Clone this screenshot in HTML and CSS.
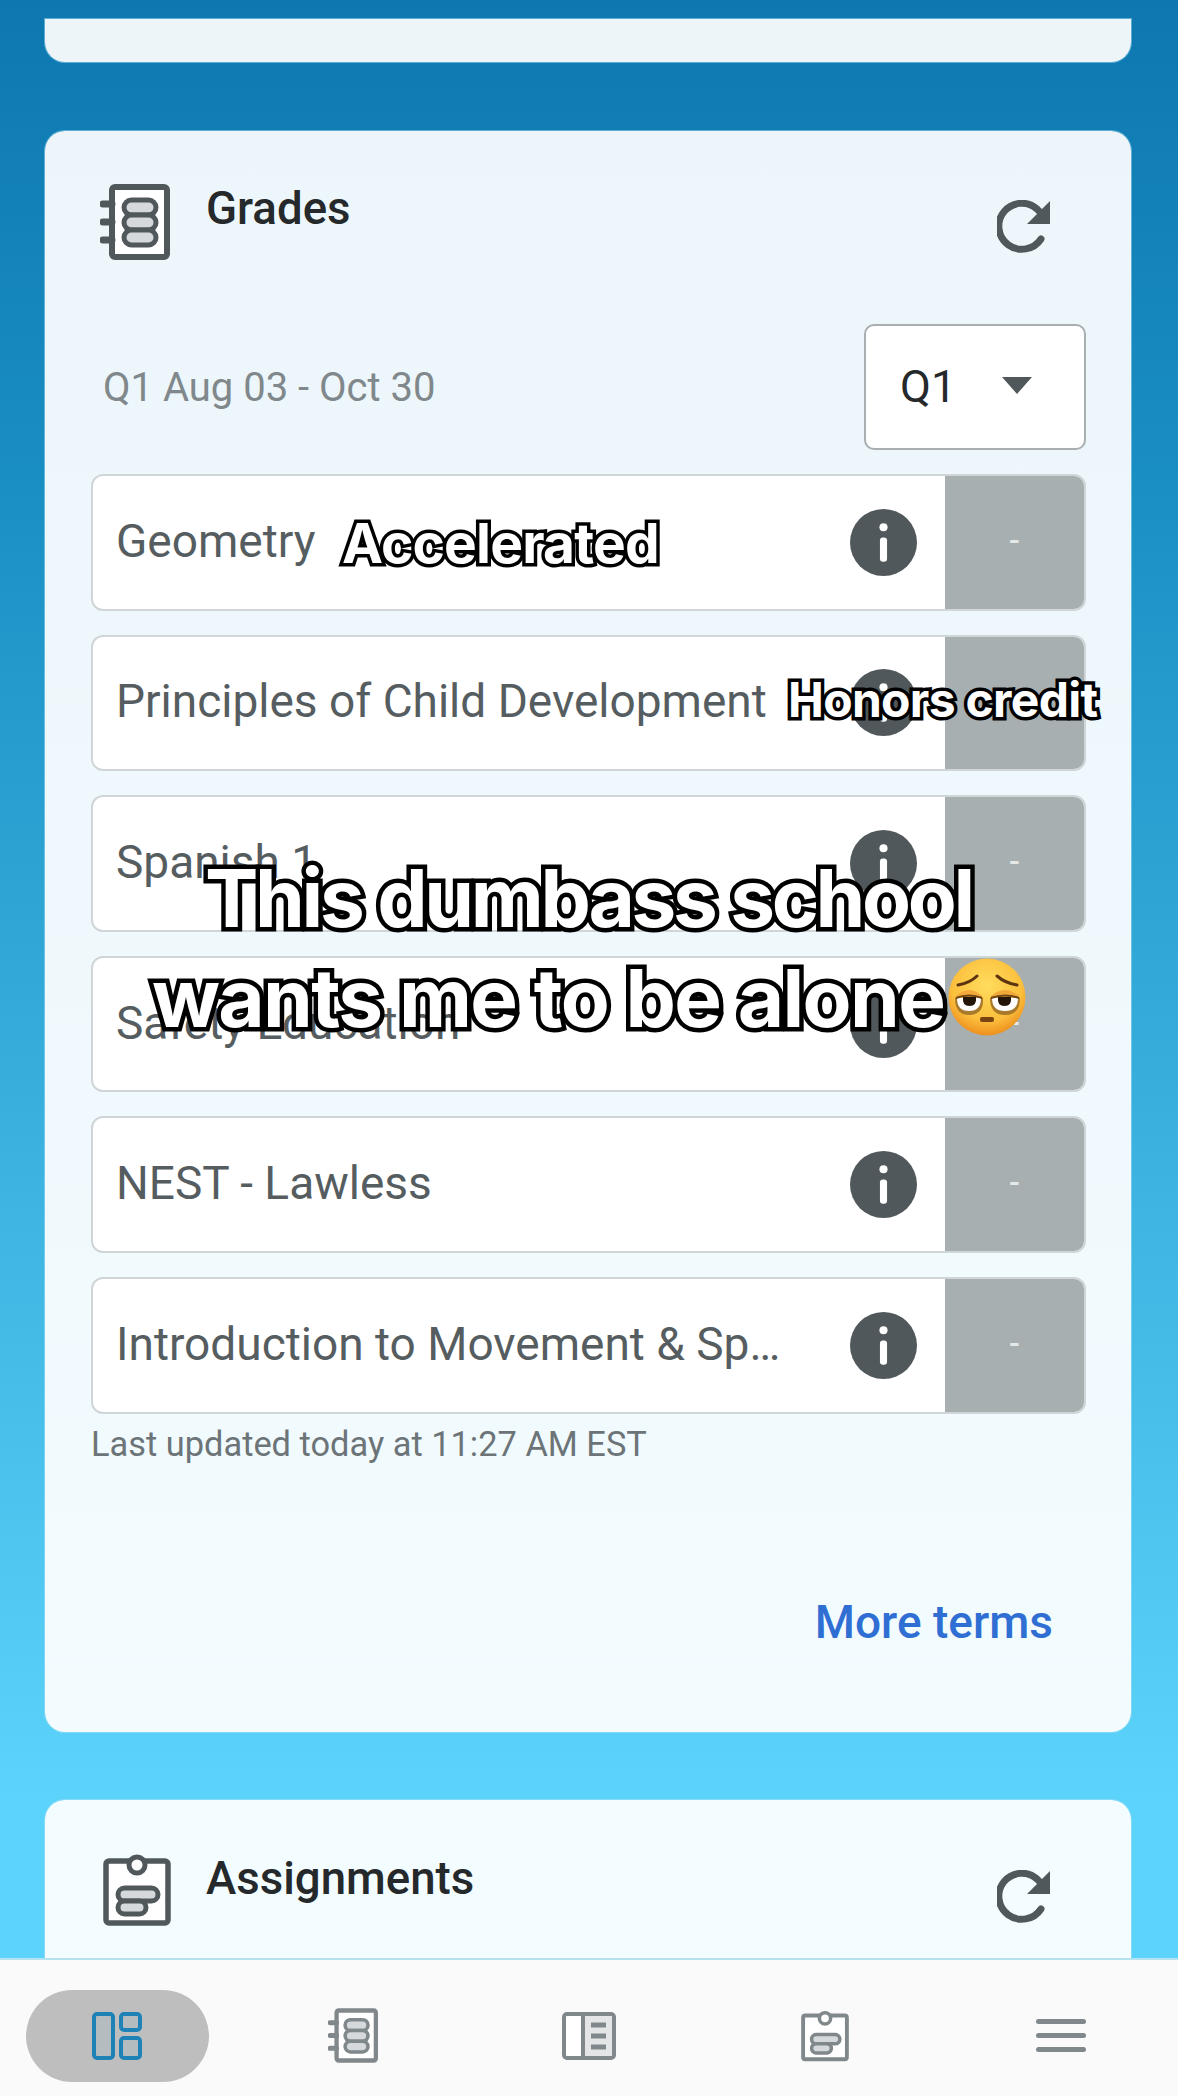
FILE: index.html
```html
<!DOCTYPE html>
<html lang="en">
<head>
    <meta charset="UTF-8">
    <title>Grades</title>
    <link rel="stylesheet" href="styles.css">
</head>
<body>
    <svg class="defs" width="0" height="0">
        <symbol id="i-notebook" viewBox="0 0 70 76">
            <rect x="12" y="3" width="55" height="70" rx="3" fill="#fff" stroke="currentColor" stroke-width="6"/>
            <path d="M3 20h9M3 38h9M3 56h9" fill="none" stroke="currentColor" stroke-width="7" stroke-linecap="round"/>
            <g fill="#d6d9db" stroke="currentColor" stroke-width="5">
                <rect x="24" y="16" width="32" height="15" rx="7.5"/>
                <rect x="24" y="31" width="32" height="15" rx="7.5"/>
                <rect x="24" y="46" width="32" height="15" rx="7.5"/>
            </g>
        </symbol>
        <symbol id="i-clipboard" viewBox="0 0 68 72">
            <rect x="3" y="7" width="62" height="62" rx="3" fill="#fff" stroke="currentColor" stroke-width="5.5"/>
            <circle cx="34" cy="11" r="8" fill="#fff" stroke="currentColor" stroke-width="5"/>
            <rect x="15" y="34" width="40" height="13" rx="6.5" fill="#d6d9db" stroke="currentColor" stroke-width="5"/>
            <rect x="15" y="47" width="28" height="13" rx="6.5" fill="#d6d9db" stroke="currentColor" stroke-width="5"/>
        </symbol>
        <symbol id="i-refresh" viewBox="0 0 54 54">
            <path d="M44 39A23 23 0 1 1 40 9L47 16" fill="none" stroke="currentColor" stroke-width="7" stroke-linecap="round"/>
            <path d="M53 1V24H30Z" fill="currentColor"/>
        </symbol>
        <symbol id="i-info" viewBox="0 0 66 66">
            <circle cx="33" cy="33" r="33" fill="currentColor"/>
            <circle cx="33" cy="18" r="4" fill="#fff"/>
            <rect x="29.5" y="28" width="7" height="24" rx="3" fill="#fff"/>
        </symbol>
    </svg>

    <div class="screen">
        <main class="scroll">
            <section class="card card-stub"></section>

            <section class="card card-grades">
                <div class="card-head">
                    <svg class="head-icon"><use href="#i-notebook"/></svg>
                    <h2 class="card-title">Grades</h2>
                    <svg class="refresh"><use href="#i-refresh"/></svg>
                </div>

                <div class="term-row">
                    <span class="term-dates">Q1 Aug 03 - Oct 30</span>
                    <div class="term-select">
                        <span>Q1</span>
                        <span class="caret"></span>
                    </div>
                </div>

                <ul class="grade-list">
                    <li class="grade-row">
                        <span class="course">Geometry</span>
                        <svg class="info"><use href="#i-info"/></svg>
                        <span class="score">-</span>
                    </li>
                    <li class="grade-row">
                        <span class="course">Principles of Child Development</span>
                        <svg class="info"><use href="#i-info"/></svg>
                        <span class="score">-</span>
                    </li>
                    <li class="grade-row">
                        <span class="course">Spanish 1</span>
                        <svg class="info"><use href="#i-info"/></svg>
                        <span class="score">-</span>
                    </li>
                    <li class="grade-row">
                        <span class="course">Safety Education</span>
                        <svg class="info"><use href="#i-info"/></svg>
                        <span class="score">-</span>
                    </li>
                    <li class="grade-row">
                        <span class="course">NEST - Lawless</span>
                        <svg class="info"><use href="#i-info"/></svg>
                        <span class="score">-</span>
                    </li>
                    <li class="grade-row">
                        <span class="course">Introduction to Movement &amp; Sports</span>
                        <svg class="info"><use href="#i-info"/></svg>
                        <span class="score">-</span>
                    </li>
                </ul>

                <p class="updated">Last updated today at 11:27 AM EST</p>
                <a class="more-terms">More terms</a>
            </section>

            <section class="card card-assign">
                <div class="card-head">
                    <svg class="head-icon head-icon-clip"><use href="#i-clipboard"/></svg>
                    <h2 class="card-title">Assignments</h2>
                    <svg class="refresh"><use href="#i-refresh"/></svg>
                </div>
            </section>
        </main>

        <nav class="tabbar">
            <div class="tab tab-active">
                <svg class="tab-dash" viewBox="0 0 50 48">
                    <g fill="#b4bcc0" stroke="currentColor" stroke-width="4">
                        <rect x="2" y="2" width="19" height="44" rx="3"/>
                        <rect x="29" y="2" width="19" height="16" rx="3"/>
                        <rect x="29" y="26" width="19" height="20" rx="3"/>
                    </g>
                </svg>
            </div>
            <div class="tab">
                <svg class="tab-note"><use href="#i-notebook"/></svg>
            </div>
            <div class="tab">
                <svg class="tab-side" viewBox="0 0 54 48">
                    <rect x="2" y="2" width="50" height="44" rx="3" fill="#fff" stroke="currentColor" stroke-width="4"/>
                    <path d="M22 4h28v40H22z" fill="#e3e5e7"/>
                    <path d="M21 2v44" stroke="currentColor" stroke-width="4"/>
                    <path d="M29 13h15M29 24h15M29 35h15" stroke="currentColor" stroke-width="5"/>
                </svg>
            </div>
            <div class="tab">
                <svg class="tab-clip"><use href="#i-clipboard"/></svg>
            </div>
            <div class="tab">
                <div class="burger"><i></i><i></i><i></i></div>
            </div>
        </nav>

        <!-- caption stickers sit on top of the screenshot -->
        <span class="sticker sticker-acc">Accelerated</span>
        <span class="sticker sticker-hon">Honors credit</span>
        <p class="caption caption-one">This dumbass school</p>
        <p class="caption caption-two">wants me to be alone</p>
        <svg class="emoji" viewBox="0 0 78 78">
            <defs>
                <radialGradient id="face" cx="50%" cy="35%" r="65%">
                    <stop offset="0" stop-color="#ffdc5e"/>
                    <stop offset=".7" stop-color="#fbbf3c"/>
                    <stop offset="1" stop-color="#ee8f1e"/>
                </radialGradient>
            </defs>
            <circle cx="39" cy="39" r="38.5" fill="url(#face)"/>
            <path d="M10 27Q22 25 29 18M69 27Q57 25 49 18" fill="none" stroke="#5c3410" stroke-width="3" stroke-linecap="round"/>
            <path d="M8 38Q21 26 34 38L34 46H8ZM43 38Q57 26 71 38L71 46H43Z" fill="#f3a93a"/>
            <path d="M7 40H35Q36 57 21 57Q7 57 7 40ZM42 40H72Q72 57 57 57Q42 57 42 40Z" fill="#a87a2a"/>
            <path d="M9 40H33Q33 53 21 53Q9 53 9 40ZM44 40H70Q70 53 57 53Q44 53 44 40Z" fill="#fff"/>
            <path d="M15 39H28Q29 48 21.5 48Q14 48 15 39ZM50 39H63Q64 48 56.5 48Q49 48 50 39Z" fill="#241509"/>
            <path d="M8 40Q21 35 34 40M43 40Q57 35 71 40" fill="none" stroke="#6b4414" stroke-width="2"/>
            <rect x="32" y="59" width="14" height="5" rx="2" fill="#7a4312"/>
        </svg>
    </div>
</body>
</html>
```

FILE: styles.css
```css
* {
    margin: 0;
    padding: 0;
    box-sizing: border-box;
}

ul {
    list-style: none;
}

body {
    width: 1178px;
    height: 2096px;
    overflow: hidden;
    font-family: Roboto, "Liberation Sans", sans-serif;
}

.defs {
    position: absolute;
}

.screen {
    position: relative;
    height: 2096px;
    display: flex;
    flex-direction: column;
}

.scroll {
    flex: 1;
    overflow: hidden;
    padding: 19px 47px 0 45px;
    background: linear-gradient(180deg, #0e77b0 0%, #1a8fc4 25%, #5bd3fa 92%);
}

.card {
    background: rgba(255, 255, 255, 0.925);
    border-radius: 20px;
    box-shadow: 0 0 0 1px rgba(170, 225, 245, 0.5);
}

.card-stub {
    height: 43px;
    border-radius: 0 0 20px 20px;
}

.card-grades {
    height: 1601px;
    margin-top: 69px;
    padding: 53px 45px 0 46px;
    display: flex;
    flex-direction: column;
}

.card-assign {
    height: 300px;
    margin-top: 68px;
    padding: 54px 45px 0 58px;
}

.card-head {
    display: flex;
    align-items: flex-start;
    height: 87px;
}

.card-grades .card-head {
    padding-left: 9px;
}

.head-icon {
    width: 70px;
    height: 76px;
    color: #50585b;
    flex-shrink: 0;
}

.head-icon-clip {
    width: 68px;
    height: 72px;
}

.card-title {
    margin: 0 0 0 36px;
    font-size: 45.6px;
    font-weight: 500;
    line-height: 50px;
    color: #25292b;
}

.head-icon-clip + .card-title {
    margin-left: 35px;
}

.refresh {
    width: 54px;
    height: 54px;
    margin: 16px 35px 0 auto;
    color: #50585b;
}

.term-row {
    margin-top: 53px;
    height: 126px;
    display: flex;
    align-items: center;
    justify-content: space-between;
    padding-left: 12px;
}

.term-dates {
    font-size: 40px;
    color: #80888c;
}

.term-select {
    width: 222px;
    height: 126px;
    display: flex;
    align-items: center;
    padding: 0 0 2px 34px;
    gap: 46px;
    background: #fff;
    border: 2px solid #a9aeb1;
    border-radius: 10px;
    font-size: 45px;
    color: #25292b;
}

.caret {
    width: 0;
    height: 0;
    border-left: 15px solid transparent;
    border-right: 15px solid transparent;
    border-top: 17px solid #50585b;
    margin-top: -2px;
}

.grade-list {
    margin-top: 24px;
    display: flex;
    flex-direction: column;
    gap: 24px;
}

.grade-row {
    height: 136.6px;
    display: flex;
    align-items: center;
    background: #fff;
    border: 2px solid #d0d5d8;
    border-radius: 12px;
    overflow: hidden;
}

.course {
    width: 676px;
    margin: -3px 0 0 23px;
    font-size: 46px;
    color: #565d60;
    white-space: nowrap;
    overflow: hidden;
    text-overflow: ellipsis;
}

.info {
    width: 67px;
    height: 67px;
    margin-left: 58px;
    color: #50585b;
    flex-shrink: 0;
}

.score {
    width: 139px;
    align-self: stretch;
    margin-left: auto;
    padding-bottom: 5px;
    display: flex;
    align-items: center;
    justify-content: center;
    background: #a7afb0;
    color: #e4e8e8;
    font-size: 32px;
    font-weight: 500;
}

.updated {
    margin-top: 10px;
    font-size: 34.4px;
    line-height: 40px;
    color: #6c7478;
}

.more-terms {
    margin: 130px 33px 0 auto;
    font-size: 46px;
    font-weight: 500;
    line-height: 56px;
    color: #2f6fd3;
}

.tabbar {
    height: 138px;
    flex-shrink: 0;
    display: flex;
    align-items: center;
    padding: 0 26px 0 26px;
    background: #fafafa;
    border-top: 2px solid #b5e2ef;
    color: #80888b;
}

.tab {
    width: 183px;
    height: 92px;
    margin: 15px 53px 0 0;
    display: flex;
    align-items: center;
    justify-content: center;
}

.tab-active {
    background: #bebebe;
    border-radius: 46px;
    color: #1e82b6;
}

.tab:last-child {
    margin-right: 0;
}

.tab-dash {
    width: 50px;
    height: 48px;
}

.tab-note {
    width: 50px;
    height: 55px;
}

.tab-side {
    width: 54px;
    height: 48px;
}

.tab-clip {
    width: 48px;
    height: 52px;
}

.burger {
    width: 50px;
    display: flex;
    flex-direction: column;
    gap: 9px;
}

.burger i {
    display: block;
    height: 5px;
    border-radius: 3px;
    background: #80888b;
}

.sticker,
.caption {
    position: absolute;
    color: #fff;
    font-family: Inter, "Liberation Sans", sans-serif;
    font-weight: 700;
    white-space: nowrap;
    -webkit-text-stroke: 9px #000;
    paint-order: stroke fill;
}

.sticker {
    line-height: 60px;
    -webkit-text-stroke-width: 7px;
}

.sticker-acc {
    left: 342px;
    top: 513px;
    font-size: 55px;
    letter-spacing: -0.8px;
}

.sticker-hon {
    left: 788px;
    top: 670px;
    font-size: 48px;
    letter-spacing: -0.7px;
}

.caption {
    font-size: 80px;
    line-height: 100px;
}

.caption-one {
    left: 205px;
    top: 848px;
    letter-spacing: -3.3px;
}

.caption-two {
    left: 152px;
    top: 948px;
    letter-spacing: -1.6px;
}

.emoji {
    position: absolute;
    left: 948px;
    top: 958px;
    width: 78px;
    height: 78px;
}
```
